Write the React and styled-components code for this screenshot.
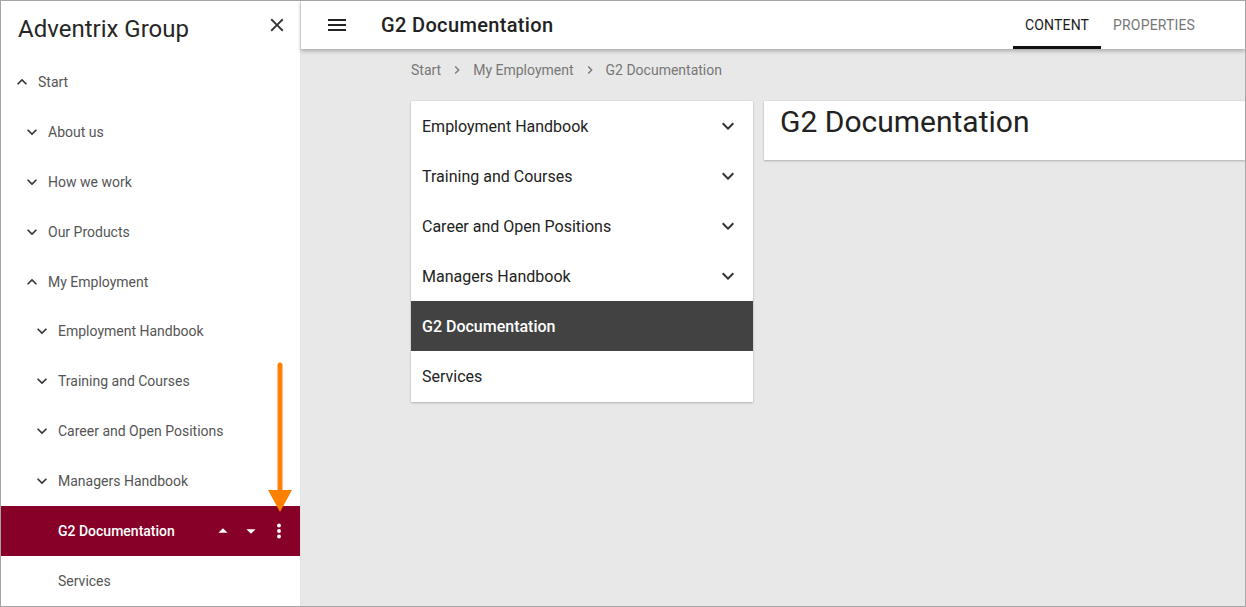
import React from "react";
import styled, { createGlobalStyle } from "styled-components";

const Global = createGlobalStyle`
  * { box-sizing: border-box; }
  html, body { margin: 0; padding: 0; background: #fff; }
  body { font-family: Roboto, "Noto Sans", Arial, sans-serif; }
`;

const Frame = styled.div`
  position: relative;
  width: 1246px;
  height: 607px;
  border: 1px solid #a4a4a4;
  display: flex;
  overflow: hidden;
  background: #fff;
`;

const Sidebar = styled.aside`
  width: 300px;
  flex: 0 0 300px;
  border-right: 1px solid #e2e2e2;
  display: flex;
  flex-direction: column;
  background: #fff;
`;

const SideHeader = styled.div`
  height: 56px;
  display: flex;
  align-items: center;
  justify-content: space-between;
  padding: 0 10px 0 17px;
`;

const Brand = styled.div`
  font-size: 24px;
  color: #262626;
  font-weight: 400;
  margin-top: 1px;
`;

const IconButton = styled.button`
  border: 0;
  background: none;
  padding: 0;
  width: 24px;
  height: 24px;
  display: flex;
  align-items: center;
  justify-content: center;
  color: ${(p) => p.$color || "#333"};
  cursor: pointer;
`;

const CloseButton = styled(IconButton)`
  margin-bottom: 8px;
  margin-right: 1px;
`;

const NavRow = styled.div`
  height: 50px;
  display: flex;
  align-items: center;
  padding-left: ${(p) => 11 + p.$level * 10}px;
  padding-right: 9px;
  background: ${(p) => (p.$active ? "#860027" : "transparent")};
  color: ${(p) => (p.$active ? "#fff" : "#555")};
  font-size: 14px;
  font-weight: ${(p) => (p.$active ? 500 : 400)};
`;

const Caret = styled.span`
  width: 20px;
  height: 20px;
  display: flex;
  align-items: center;
  justify-content: center;
  margin-right: 6px;
  color: #333;
  visibility: ${(p) => (p.$hidden ? "hidden" : "visible")};
`;

const RowLabel = styled.span`
  flex: 1;
`;

const RowTools = styled.div`
  display: flex;
  align-items: center;
  gap: 4px;
`;

const Main = styled.main`
  flex: 1;
  display: flex;
  flex-direction: column;
  background: #e8e8e8;
  min-width: 0;
`;

const TopBar = styled.header`
  height: 48px;
  background: #fff;
  display: flex;
  align-items: center;
  padding-left: 24px;
  box-shadow: 0 2px 4px rgba(0, 0, 0, 0.28);
  position: relative;
  z-index: 1;
`;

const PageTitle = styled.h1`
  margin: 0 0 0 32px;
  font-size: 20px;
  font-weight: 500;
  letter-spacing: 0.35px;
  color: #222;
  flex: 1;
`;

const Tabs = styled.nav`
  display: flex;
  height: 48px;
  margin-right: 38px;
`;

const Tab = styled.div`
  height: 48px;
  padding: 3px 12px 0;
  display: flex;
  align-items: center;
  font-size: 14px;
  font-weight: 400;
  letter-spacing: 0.15px;
  text-transform: uppercase;
  color: ${(p) => (p.$active ? "#1a1a1a" : "#777")};
  border-bottom: 3px solid ${(p) => (p.$active ? "#111" : "transparent")};
`;

const Content = styled.div`
  padding: 10px 0 0 110px;
  display: flex;
  flex-direction: column;
`;

const Crumbs = styled.div`
  height: 21px;
  display: flex;
  align-items: center;
  font-size: 14px;
  color: #777;
`;

const CrumbSep = styled.span`
  display: flex;
  margin: 0 8px;
  color: #777;
`;

const Columns = styled.div`
  display: flex;
  gap: 11px;
  margin-top: 21px;
  align-items: flex-start;
`;

const Card = styled.div`
  background: #fff;
  box-shadow: 0 1px 2px rgba(0, 0, 0, 0.22), 0 0 1px rgba(0, 0, 0, 0.15);
`;

const NavCard = styled(Card)`
  width: 342px;
  flex: 0 0 342px;
  padding: 0 0 1px;
`;

const CardRow = styled.div`
  height: 50px;
  display: flex;
  align-items: center;
  padding: 0 13px 0 11px;
  font-size: 16px;
  font-weight: ${(p) => (p.$active ? 500 : 400)};
  color: ${(p) => (p.$active ? "#fff" : "#222")};
  background: ${(p) => (p.$active ? "#424242" : "#fff")};
  justify-content: space-between;
`;

const TitleCard = styled(Card)`
  flex: 1;
  padding: 3px 16px 20px;
`;

const BigTitle = styled.h2`
  margin: 0;
  font-size: 30px;
  line-height: 36px;
  font-weight: 400;
  color: #222;
`;

const Pointer = styled.svg`
  position: absolute;
  left: 264px;
  top: 358px;
  pointer-events: none;
`;

const ChevronDown = ({ size = 20, color = "currentColor" }) => (
  <svg width={size} height={size} viewBox="0 0 24 24" fill={color}>
    <path d="M16.59 8.59 12 13.17 7.41 8.59 6 10l6 6 6-6z" />
  </svg>
);
const ChevronUp = ({ size = 20, color = "currentColor" }) => (
  <svg width={size} height={size} viewBox="0 0 24 24" fill={color}>
    <path d="M12 8l-6 6 1.41 1.41L12 10.83l4.59 4.58L18 14z" />
  </svg>
);
const ChevronRight = () => (
  <svg width="16" height="16" viewBox="0 0 24 24" fill="currentColor">
    <path d="M10 6 8.59 7.41 13.17 12l-4.58 4.59L10 18l6-6z" />
  </svg>
);
const CloseIcon = () => (
  <svg width="22" height="22" viewBox="0 0 24 24" fill="#333">
    <path d="M19 6.41 17.59 5 12 10.59 6.41 5 5 6.41 10.59 12 5 17.59 6.41 19 12 13.41 17.59 19 19 17.59 13.41 12z" />
  </svg>
);
const MenuIcon = () => (
  <svg width="24" height="24" viewBox="0 0 24 24" fill="#222">
    <path d="M3 18h18v-2H3v2zm0-5h18v-2H3v2zm0-7v2h18V6H3z" />
  </svg>
);
const ArrowUp = () => (
  <svg width="22" height="22" viewBox="0 0 24 24" fill="#fff">
    <path d="m7 14 5-5 5 5z" />
  </svg>
);
const ArrowDown = () => (
  <svg width="22" height="22" viewBox="0 0 24 24" fill="#fff">
    <path d="m7 10 5 5 5-5z" />
  </svg>
);
const Kebab = () => (
  <svg width="22" height="22" viewBox="0 0 24 24" fill="#fff">
    <circle cx="12" cy="6" r="2.1" />
    <circle cx="12" cy="12" r="2.1" />
    <circle cx="12" cy="18" r="2.1" />
  </svg>
);

const sideItems = [
  { label: "Start", level: 0, icon: "up" },
  { label: "About us", level: 1, icon: "down" },
  { label: "How we work", level: 1, icon: "down" },
  { label: "Our Products", level: 1, icon: "down" },
  { label: "My Employment", level: 1, icon: "up" },
  { label: "Employment Handbook", level: 2, icon: "down" },
  { label: "Training and Courses", level: 2, icon: "down" },
  { label: "Career and Open Positions", level: 2, icon: "down" },
  { label: "Managers Handbook", level: 2, icon: "down" },
  { label: "G2 Documentation", level: 2, icon: null, active: true },
  { label: "Services", level: 2, icon: null },
];

const cardItems = [
  { label: "Employment Handbook", more: true },
  { label: "Training and Courses", more: true },
  { label: "Career and Open Positions", more: true },
  { label: "Managers Handbook", more: true },
  { label: "G2 Documentation", active: true },
  { label: "Services" },
];

export default function App() {
  return (
    <>
      <Global />
      <Frame>
        <Sidebar>
          <SideHeader>
            <Brand>Adventrix Group</Brand>
            <CloseButton aria-label="close">
              <CloseIcon />
            </CloseButton>
          </SideHeader>
          {sideItems.map((it) => (
            <NavRow key={it.label} $level={it.level} $active={it.active}>
              <Caret $hidden={!it.icon}>
                {it.icon === "up" ? <ChevronUp /> : <ChevronDown />}
              </Caret>
              <RowLabel>{it.label}</RowLabel>
              {it.active && (
                <RowTools>
                  <IconButton $color="#fff">
                    <ArrowUp />
                  </IconButton>
                  <IconButton $color="#fff">
                    <ArrowDown />
                  </IconButton>
                  <IconButton $color="#fff">
                    <Kebab />
                  </IconButton>
                </RowTools>
              )}
            </NavRow>
          ))}
        </Sidebar>
        <Main>
          <TopBar>
            <IconButton aria-label="menu">
              <MenuIcon />
            </IconButton>
            <PageTitle>G2 Documentation</PageTitle>
            <Tabs>
              <Tab $active>Content</Tab>
              <Tab>Properties</Tab>
            </Tabs>
          </TopBar>
          <Content>
            <Crumbs>
              <span>Start</span>
              <CrumbSep>
                <ChevronRight />
              </CrumbSep>
              <span>My Employment</span>
              <CrumbSep>
                <ChevronRight />
              </CrumbSep>
              <span>G2 Documentation</span>
            </Crumbs>
            <Columns>
              <NavCard>
                {cardItems.map((it) => (
                  <CardRow key={it.label} $active={it.active}>
                    <span>{it.label}</span>
                    {it.more && <ChevronDown size={24} color="#333" />}
                  </CardRow>
                ))}
              </NavCard>
              <TitleCard>
                <BigTitle>G2 Documentation</BigTitle>
              </TitleCard>
            </Columns>
          </Content>
        </Main>
        <Pointer width="30" height="156" viewBox="0 0 30 156">
          <line x1="15" y1="6" x2="15" y2="134" stroke="#ff8000" strokeWidth="5" strokeLinecap="round" />
          <polygon points="3,131 27,131 15,153" fill="#ff8000" />
        </Pointer>
      </Frame>
    </>
  );
}
